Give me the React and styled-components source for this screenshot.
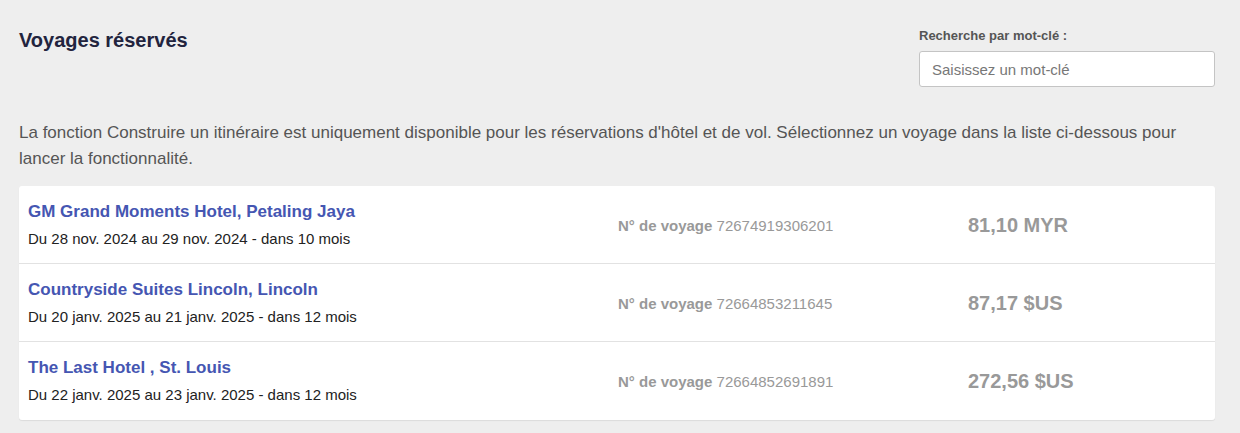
import React from 'react'
import styled, { createGlobalStyle } from 'styled-components'

const GlobalStyle = createGlobalStyle`
  body {
    margin: 0;
    background: #eeeeee;
    font-family: "Liberation Sans", Arial, sans-serif;
  }
`

const Page = styled.div`
  padding: 0 25px 14px 19px;
`

const Header = styled.div`
  display: flex;
  justify-content: space-between;
  align-items: flex-start;
  padding-top: 28px;
`

const Title = styled.h1`
  margin: 0;
  font-size: 20px;
  line-height: 24px;
  font-weight: 700;
  color: #22243e;
`

const Search = styled.div`
  display: flex;
  flex-direction: column;
  width: 296px;
`

const Label = styled.label`
  font-size: 13px;
  line-height: 16px;
  font-weight: 700;
  color: #555;
  margin-bottom: 7px;
`

const Input = styled.input`
  box-sizing: border-box;
  height: 36px;
  width: 100%;
  padding: 0 12px;
  border: 1px solid #c4c4c4;
  border-radius: 3px;
  background: #fff;
  font-family: inherit;
  font-size: 15px;
  color: #333;
  &::placeholder {
    color: #777;
  }
`

const Intro = styled.p`
  margin: 33px 0 14px;
  font-size: 17px;
  line-height: 26px;
  color: #555;
`

const List = styled.ul`
  list-style: none;
  margin: 0;
  padding: 0;
  background: #fff;
  border-radius: 3px;
  box-shadow: 0 1px 1px rgba(0, 0, 0, 0.08);
`

const Row = styled.li`
  display: grid;
  grid-template-columns: 590px 350px 1fr;
  align-items: center;
  padding: 16px 9px 15px;
  border-bottom: 1px solid #e2e2e2;
  &:last-child {
    border-bottom: none;
    padding-bottom: 16px;
  }
`

const Hotel = styled.div`
  display: flex;
  flex-direction: column;
  gap: 8px;
`

const HotelName = styled.a`
  font-size: 17px;
  line-height: 20px;
  font-weight: 700;
  color: #4556b2;
  text-decoration: none;
  cursor: pointer;
`

const Dates = styled.span`
  font-size: 15px;
  line-height: 18px;
  color: #222;
`

const TripNo = styled.div`
  font-size: 15px;
  color: #999;
  b {
    font-weight: 700;
  }
`

const Price = styled.div`
  font-size: 20px;
  font-weight: 700;
  color: #999;
`

const trips = [
  {
    name: 'GM Grand Moments Hotel, Petaling Jaya',
    dates: 'Du 28 nov. 2024 au 29 nov. 2024 - dans 10 mois',
    no: '72674919306201',
    price: '81,10 MYR',
  },
  {
    name: 'Countryside Suites Lincoln, Lincoln',
    dates: 'Du 20 janv. 2025 au 21 janv. 2025 - dans 12 mois',
    no: '72664853211645',
    price: '87,17 $US',
  },
  {
    name: 'The Last Hotel , St. Louis',
    dates: 'Du 22 janv. 2025 au 23 janv. 2025 - dans 12 mois',
    no: '72664852691891',
    price: '272,56 $US',
  },
]

const App = () => {
  return (
    <Page>
      <GlobalStyle />
      <Header>
        <Title>Voyages réservés</Title>
        <Search>
          <Label htmlFor="kw">Recherche par mot-clé :</Label>
          <Input id="kw" placeholder="Saisissez un mot-clé" />
        </Search>
      </Header>
      <Intro>
        La fonction Construire un itinéraire est uniquement disponible pour les réservations d'hôtel et de vol. Sélectionnez un voyage dans la liste ci-dessous pour lancer la fonctionnalité.
      </Intro>
      <List>
        {trips.map((t) => (
          <Row key={t.no}>
            <Hotel>
              <HotelName>{t.name}</HotelName>
              <Dates>{t.dates}</Dates>
            </Hotel>
            <TripNo>
              <b>N° de voyage</b> {t.no}
            </TripNo>
            <Price>{t.price}</Price>
          </Row>
        ))}
      </List>
    </Page>
  )
}

export default App
